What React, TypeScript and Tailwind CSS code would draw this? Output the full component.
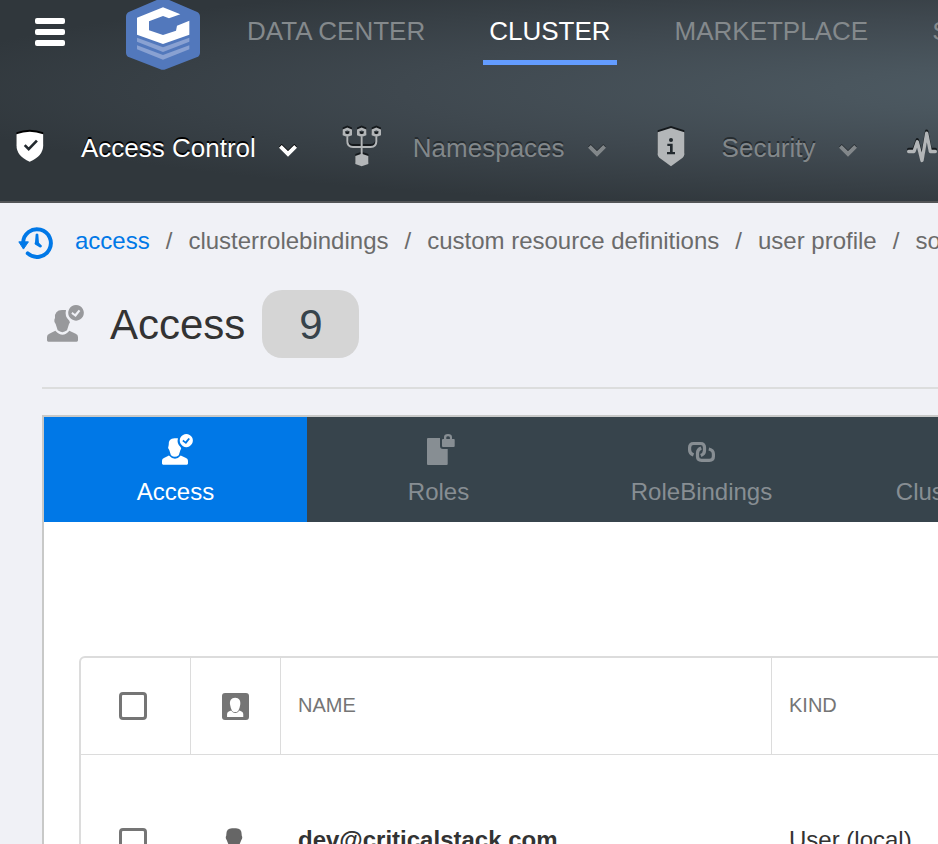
import type { ReactNode } from "react";

function Logo() {
  return (
    <svg viewBox="378 0 222 210" className="h-[70px] w-[74px]" role="img" aria-label="Critical Stack">
      <path
        fill="#5278bc"
        d="M378 50Q378 39 388 35L475 -2Q489 -8 503 -2L590 35Q600 39 600 50V158Q600 168 590 172L497 208Q489 211 481 208L388 172Q378 168 378 158Z"
      />
      <path
        fill="#fff"
        d="M489 22L411 53V104L489 132L568 104V62L531 77L528 92L489 105L447 91V64L489 48L507 55L541 43Z"
      />
      <path fill="#89a1d2" d="M411 113L489 142L568 113V125L489 156L411 125Z" />
      <path fill="#89a1d2" d="M411 136L489 165L568 136V148L489 179L411 148Z" />
    </svg>
  );
}

function UserCheck({ className }: { className: string }) {
  return (
    <svg viewBox="141 285 111 111" className={className} fill="currentColor" aria-hidden="true">
      <path d="M145 395Q141 395 141 391V381Q141 374 148 371L166 362Q188 386 208 362L227 371Q234 374 234 381V391Q234 395 230 395Z" />
      <path d="M165 324Q163 301 186 300L198 300Q193 320 208 332Q212 338 207 342L201 361Q187 372 173 361L167 342Q160 334 165 324Z" />
      <path
        fillRule="evenodd"
        d="M228 285a23.500 23.500 0 1 0 0.1 0ZM217 306L225 312L236 299L241 303L227 321L214 311Z"
      />
    </svg>
  );
}

function ShieldCheck() {
  return (
    <svg viewBox="49 392 84 94" className="h-[31px] w-7" aria-hidden="true">
      <path fill="currentColor" d="M50 402Q90 386 131 402V435Q131 468 90 485Q50 468 50 435Z" />
      <path fill="none" stroke="#22292e" strokeWidth="8" d="M75 435L87 447L112 421" />
    </svg>
  );
}

function NamespaceIcon() {
  return (
    <svg viewBox="97 381 120 120" className="size-10" fill="none" stroke="currentColor" aria-hidden="true">
      <g strokeWidth="8">
        <path d="M113 387L123 391V403L113 407L103 403V391Z" />
        <path d="M156 387L166 391V403L156 407L146 403V391Z" />
        <path d="M200 387L210 391V403L200 407L190 403V391Z" />
      </g>
      <path strokeWidth="6" d="M113 410V424Q113 441 130 441H183Q200 441 200 424V410M156 410V465" />
      <path fill="currentColor" stroke="none" d="M156 461L176 468V492L156 499L137 492V468Z" />
    </svg>
  );
}

function ShieldInfo() {
  return (
    <svg viewBox="84 383 82 117" className="h-[39px] w-7" aria-hidden="true">
      <path fill="currentColor" d="M125 383L165 396V462Q165 468 160 472L125 498L90 472Q85 468 85 462V396Z" />
      <circle cx="125" cy="419" r="6" fill="#22292e" />
      <path fill="#22292e" d="M114 430H130V455H137V462H113V455H122V437H114Z" />
    </svg>
  );
}

function PulseIcon() {
  return (
    <svg
      viewBox="830 395 90 95"
      className="h-8 w-[30px]"
      fill="none"
      stroke="currentColor"
      strokeWidth="10"
      strokeLinecap="round"
      strokeLinejoin="round"
      aria-hidden="true"
    >
      <path d="M835 456H851L861 427L875 483L889 401L900 456H915" />
    </svg>
  );
}

function Chevron() {
  return (
    <svg viewBox="836 430 54 42" className="mt-1.5 h-[14px] w-[18px]" aria-hidden="true">
      <path fill="none" stroke="currentColor" strokeWidth="12" d="M840 437L863 460L886 437" />
    </svg>
  );
}

function HistoryIcon() {
  return (
    <svg viewBox="54 50 105 97" className="h-8 w-[35px] text-[#0078e7]" aria-hidden="true">
      <path
        fill="none"
        stroke="currentColor"
        strokeWidth="12"
        strokeLinecap="round"
        d="M69 98A42 42 0 1 1 83 130"
      />
      <path fill="currentColor" stroke="currentColor" strokeWidth="3" strokeLinejoin="round" d="M56 95H85L70 117Z" />
      <path fill="currentColor" d="M107 72Q111 68 115 72L117 98L126 107Q126 113 120 112L105 103Q102 99 105 96Z" />
    </svg>
  );
}

function RolesIcon() {
  return (
    <svg viewBox="428 434 28 31" className="h-[31px] w-7" fill="currentColor" aria-hidden="true">
      <path d="M429 438H441V446Q441 449 444 449H448.700V464Q448.700 465 447.700 465H429Q428 465 428 464V439Q428 438 429 438Z" />
      <path
        fillRule="evenodd"
        d="M443 440Q443 439 444 439H445V437Q445 434 449 434Q453 434 453 437V439H455Q455.700 439 455.700 440V446Q455.700 447 454.700 447H444Q443 447 443 446ZM447.300 439H450.900V437.500Q450.900 436.300 449 436.300Q447.300 436.300 447.300 437.500Z"
      />
    </svg>
  );
}

function LinkIcon() {
  return (
    <svg
      viewBox="687 434 28 31"
      className="h-[31px] w-7"
      fill="none"
      stroke="currentColor"
      strokeWidth="3.200"
      aria-hidden="true"
    >
      <path d="M692.500 455Q688.600 453.500 688.600 450V447.500Q688.600 443.500 692.600 443.500H699.500Q703.500 443.500 703.500 447.500V450.500Q703.500 454 699.800 455.500" />
      <path d="M707.800 449Q712.400 450 712.400 454V456.500Q712.400 460.300 708.400 460.300H700.500Q696.500 460.300 696.500 456.500V453Q696.500 449.500 700.200 448" />
    </svg>
  );
}

function ContactIcon() {
  return (
    <svg viewBox="456 160 80 80" className="size-[27px] text-[#757575]" role="img" aria-label="Type">
      <rect x="456" y="160" width="80" height="80" rx="9" fill="currentColor" />
      <path
        fill="#fff"
        d="M495 174C507 174 512 183 510 195Q508 208 504 213Q495 220 486 213Q482 208 480 195C478 183 483 174 495 174Z"
      />
      <path fill="#fff" d="M471 231V222Q471 217 476 215L483 212Q495 227 508 212L514 215Q519 217 519 222V231Z" />
    </svg>
  );
}

function PersonIcon() {
  return (
    <svg viewBox="0 0 84 84" className="size-7 text-[#666]" fill="currentColor" aria-hidden="true">
      <path d="M19 22Q18 1 36 1H48Q66 1 65 22Q69 30 64 36L57 53Q42 64 27 53L20 36Q15 30 19 22Z" />
      <path d="M0 84V72Q0 66 6 63L24 56Q42 74 60 56L78 63Q84 66 84 72V84Z" />
    </svg>
  );
}

const sections = ["DATA CENTER", "CLUSTER", "MARKETPLACE", "SETTINGS"];

const menus: { label: string; icon: ReactNode }[] = [
  { label: "Access Control", icon: <ShieldCheck /> },
  { label: "Namespaces", icon: <NamespaceIcon /> },
  { label: "Security", icon: <ShieldInfo /> },
  { label: "Health", icon: <PulseIcon /> },
];

const crumbs = ["access", "clusterrolebindings", "custom resource definitions", "user profile", "software"];

const tabs: { label: string; icon: ReactNode }[] = [
  {
    label: "Access",
    icon: (
      <span className="pl-1">
        <UserCheck className="size-[31px]" />
      </span>
    ),
  },
  {
    label: "Roles",
    icon: (
      <span className="pl-1">
        <RolesIcon />
      </span>
    ),
  },
  { label: "RoleBindings", icon: <LinkIcon /> },
  {
    label: "ClusterRoles",
    icon: (
      <span className="pl-1">
        <RolesIcon />
      </span>
    ),
  },
];

function Checkbox({ label }: { label: string }) {
  return (
    <input
      type="checkbox"
      aria-label={label}
      className="block size-7 appearance-none rounded-[4px] border-3 border-[#757575] bg-white checked:bg-[#0078e7]"
    />
  );
}

function Header() {
  return (
    <header className="overflow-hidden border-b-2 border-[#535557] bg-[#30373c] bg-[radial-gradient(ellipse_1250px_125px_at_1150px_90px,#505e67_0%,#4a565e_25%,#3f484f_60%,#30373c_100%)] text-[26px] leading-8">
      <div className="flex h-[70px] items-start">
        <button type="button" aria-label="Menu" className="ml-[35px] flex w-[30px] shrink-0 flex-col gap-[5px] pt-[18px]">
          <span className="h-1.5 w-full rounded-[2px] bg-white" />
          <span className="h-1.5 w-full rounded-[2px] bg-white" />
          <span className="h-1.5 w-full rounded-[2px] bg-white" />
        </button>
        <a href="#home" className="ml-[61px] shrink-0">
          <Logo />
        </a>
        <nav className="ml-[41px] flex gap-[52px]">
          {sections.map((s) => (
            <a
              key={s}
              href="#section"
              className={
                s === "CLUSTER"
                  ? "flex h-[65px] shrink-0 items-center border-b-5 border-[#639cff] px-1.5 pt-0.5 whitespace-nowrap text-white"
                  : "flex h-[65px] shrink-0 items-center border-b-5 border-transparent px-1.5 pt-0.5 whitespace-nowrap text-[#84898c]"
              }
            >
              {s}
            </a>
          ))}
        </nav>
      </div>
      <nav className="mt-[57px] mb-8 ml-2.5 flex h-[42px] gap-[45px]">
        {menus.map((m, i) => (
          <button
            key={m.label}
            type="button"
            className={
              i === 0
                ? "flex shrink-0 items-center text-white [text-shadow:0_-2px_0_#000]"
                : "flex shrink-0 items-center text-[#82878a] [text-shadow:0_-2px_0_#262c30]"
            }
          >
            <span
              className={
                i === 0
                  ? "flex w-10 justify-center pb-1 [filter:drop-shadow(0_-2px_0_#000)]"
                  : "flex w-10 justify-center pb-0.5 text-[#b3b6b8] [filter:drop-shadow(0_-2px_0_#15191c)]"
              }
            >
              {m.icon}
            </span>
            <span className="ml-[31px]">{m.label}</span>
            <span
              className={
                i === 0
                  ? "ml-[23px] [filter:drop-shadow(0_-1px_0_#000)]"
                  : "ml-[23px] [filter:drop-shadow(0_-1px_0_#262c30)]"
              }
            >
              <Chevron />
            </span>
          </button>
        ))}
      </nav>
    </header>
  );
}

export default function App() {
  return (
    <div className="h-screen overflow-hidden bg-[#f0f1f6] font-['Liberation_Sans',Arial,sans-serif] text-[#333]">
      <Header />

      <nav aria-label="History" className="flex h-[76px] items-center pl-[18px] text-2xl text-[#6b6b6b]">
        <span className="mt-[3px] mr-[22px] shrink-0">
          <HistoryIcon />
        </span>
        {crumbs.map((c, i) => (
          <span key={c} className="flex shrink-0 whitespace-nowrap">
            {i > 0 && <span className="mx-4">/</span>}
            <a href="#crumb" className={i === 0 ? "text-[#0078e7]" : "text-[#6b6b6b]"}>
              {c}
            </a>
          </span>
        ))}
      </nav>

      <main className="ml-[42px] min-w-[1400px]">
        <div className="mt-[11px] flex h-[68px] items-center pl-[5px]">
          <UserCheck className="mb-0.5 size-[37px] text-[#98999c]" />
          <h1 className="mt-0.5 ml-[26px] text-[42px] leading-[48px]">Access</h1>
          <span className="ml-[17px] flex h-full w-[97px] items-center justify-center rounded-[20px] bg-[#d5d5d5] text-[42px] text-[#37444c]">
            9
          </span>
        </div>
        <hr className="mt-[29px] border-t-2 border-[#dcdddd]" />

        <section className="mt-[26px] border-2 border-[#c8c9c8] bg-white">
          <div role="tablist" className="flex bg-[#37444c] text-2xl">
            {tabs.map((t, i) => (
              <button
                key={t.label}
                type="button"
                role="tab"
                aria-selected={i === 0}
                className={
                  i === 0
                    ? "flex w-[263px] shrink-0 flex-col items-center gap-[11px] bg-[#0078e7] pt-[17px] pb-3.5 text-white"
                    : "flex w-[263px] shrink-0 flex-col items-center gap-[11px] pt-[17px] pb-3.5 text-[#878e93]"
                }
              >
                {t.icon}
                <span>{t.label}</span>
              </button>
            ))}
          </div>

          <div className="px-[35px] pt-[134px]">
            <table className="w-full table-fixed border-separate border-spacing-0 rounded-[6px] border-2 border-[#dcdcdc] text-left">
              <colgroup>
                <col className="w-[110px]" />
                <col className="w-[90px]" />
                <col className="w-[491px]" />
                <col />
              </colgroup>
              <thead>
                <tr className="h-[97px] text-xl text-[#757575]">
                  <th className="border-r border-b border-[#dcdcdc] pl-[38px]">
                    <Checkbox label="Select all" />
                  </th>
                  <th className="border-r border-b border-[#dcdcdc] pl-[31px]">
                    <ContactIcon />
                  </th>
                  <th className="border-r border-b border-[#dcdcdc] pb-[3px] pl-[17px] font-normal">NAME</th>
                  <th className="border-b border-[#dcdcdc] pb-[3px] pl-[17px] font-normal">KIND</th>
                </tr>
              </thead>
              <tbody>
                <tr className="h-[173px] text-2xl">
                  <td className="pl-[38px]">
                    <Checkbox label="Select dev@criticalstack.com" />
                  </td>
                  <td className="pl-[29px]">
                    <PersonIcon />
                  </td>
                  <td className="pb-[3px] pl-[17px] font-bold">dev@criticalstack.com</td>
                  <td className="pb-[3px] pl-[17px]">User (local)</td>
                </tr>
              </tbody>
            </table>
          </div>
        </section>
      </main>
    </div>
  );
}
